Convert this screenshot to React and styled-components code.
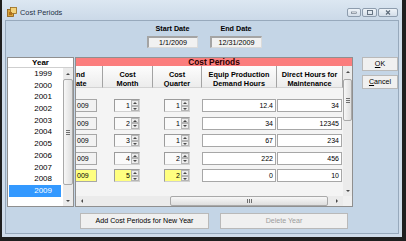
import React from 'react';
import styled, { createGlobalStyle } from 'styled-components';

const GlobalStyle = createGlobalStyle`
  html, body {
    margin: 0;
    padding: 0;
    background: #1f1f1f;
  }
  body {
    font-family: 'Liberation Sans', Arial, sans-serif;
    color: #000;
  }
  #root {
    width: 406px;
    height: 241px;
    overflow: hidden;
  }
`;

const Window = styled.div`
  width: 400px;
  height: 237px;
  margin-left: 2px;
  background: #cfdcea;
  display: flex;
  flex-direction: column;
  box-sizing: border-box;
`;

const TitleBar = styled.div`
  height: 20px;
  box-sizing: border-box;
  padding: 4px 4px 0 5px;
  display: flex;
  align-items: center;
  background: linear-gradient(#dce7f2, #cbd9e8);
`;

const Title = styled.span`
  margin-left: 3px;
  font-size: 7.4px;
  color: #1e2f45;
`;

const Controls = styled.div`
  margin-left: auto;
  display: flex;
  gap: 1px;
`;

const WinButton = styled.div`
  width: ${p => p.$w}px;
  height: 9px;
  box-sizing: border-box;
  border: 1px solid #8d9cad;
  border-radius: 2px;
  background: linear-gradient(#eef3f8, #d4dee9);
  display: flex;
  align-items: center;
  justify-content: center;
`;

const Client = styled.div`
  flex: 1;
  margin: 0 3px 3px;
  border: 1px solid #97a9bc;
  background: #c4d5e6;
  display: flex;
  flex-direction: column;
`;

const DatesRow = styled.div`
  display: flex;
  gap: 12px;
  margin-left: 141px;
  padding-top: 3px;
`;

const DateGroup = styled.div`
  width: ${p => p.$w}px;
  display: flex;
  flex-direction: column;
  align-items: center;
`;

const DateLabel = styled.div`
  font-size: 7.2px;
  font-weight: 700;
  line-height: 9px;
  margin-bottom: 3px;
`;

const DateBox = styled.div`
  width: 100%;
  height: 12px;
  box-sizing: border-box;
  border-style: solid;
  border-width: 2px 1px 1px 2px;
  border-color: #a4a4a4 #dadada #dadada #a4a4a4;
  background: #f1f1f1;
  font-size: 7.2px;
  line-height: 9px;
  text-align: center;
`;

const MainRow = styled.div`
  display: flex;
  align-items: flex-start;
  margin-top: 9px;
  padding-left: 1px;
`;

const YearPanel = styled.div`
  width: 67px;
  height: 150px;
  box-sizing: border-box;
  border: 1px solid #8f8f8f;
  background: #fff;
  display: flex;
  flex-direction: column;
`;

const YearHeader = styled.div`
  height: 10px;
  box-sizing: border-box;
  border-bottom: 1px solid #cfcfcf;
  font-size: 8px;
  font-weight: 700;
  line-height: 9px;
  text-align: center;
`;

const YearBody = styled.div`
  flex: 1;
  display: flex;
`;

const YearList = styled.div`
  flex: 1;
`;

const YearItem = styled.div`
  height: 11.7px;
  line-height: 11.7px;
  margin: 0 2px 0 1px;
  padding-right: 9px;
  font-size: 8px;
  text-align: right;
  background: ${p => (p.$selected ? '#3399ff' : 'transparent')};
  color: ${p => (p.$selected ? '#fff' : '#000')};
`;

const ScrollBar = styled.div`
  display: flex;
  flex-direction: ${p => (p.$horizontal ? 'row' : 'column')};
  width: ${p => (p.$horizontal ? `${p.$size}px` : `${p.$thick}px`)};
  height: ${p => (p.$horizontal ? `${p.$thick}px` : `${p.$size}px`)};
  background: #ebebeb;
  box-sizing: border-box;
  flex-shrink: 0;
`;

const ScrollArrow = styled.div`
  flex: 0 0 ${p => p.$len}px;
  display: flex;
  align-items: center;
  justify-content: center;
`;

const Triangle = styled.div`
  width: 0;
  height: 0;
  border-style: solid;
  ${p =>
    p.$dir === 'up'
      ? 'border-width: 0 2px 2px 2px; border-color: transparent transparent #4a4a4a transparent;'
      : p.$dir === 'down'
      ? 'border-width: 2px 2px 0 2px; border-color: #4a4a4a transparent transparent transparent;'
      : p.$dir === 'left'
      ? 'border-width: 2px 2px 2px 0; border-color: transparent #4a4a4a transparent transparent;'
      : 'border-width: 2px 0 2px 2px; border-color: transparent transparent transparent #4a4a4a;'}
`;

const ScrollSpace = styled.div`
  flex: 0 0 ${p => p.$len}px;
`;

const Thumb = styled.div`
  flex: 0 0 ${p => p.$len}px;
  box-sizing: border-box;
  border: 1px solid #a9a9a9;
  border-radius: 2px;
  background: ${p =>
    p.$horizontal
      ? 'linear-gradient(#f7f7f7, #dedede)'
      : 'linear-gradient(to right, #f7f7f7, #dedede)'};
  display: flex;
  align-items: center;
  justify-content: center;
`;

const Grip = styled.div`
  width: ${p => (p.$horizontal ? 5 : 4)}px;
  height: ${p => (p.$horizontal ? 4 : 5)}px;
  background: ${p =>
    p.$horizontal
      ? 'repeating-linear-gradient(to right, #6f6f6f 0 1px, transparent 1px 2px)'
      : 'repeating-linear-gradient(#6f6f6f 0 1px, transparent 1px 2px)'};
`;

const GridPanel = styled.div`
  width: 278px;
  height: 150px;
  margin-left: 1px;
  box-sizing: border-box;
  border: 1px solid #8f8f8f;
  background: #f4f4f4;
  display: flex;
  flex-direction: column;
`;

const PinkBar = styled.div`
  height: 8px;
  background: #fb7d7d;
  font-size: 8.4px;
  font-weight: 700;
  line-height: 8px;
  text-align: center;
  color: #2a0000;
`;

const GridMiddle = styled.div`
  display: flex;
  height: 130px;
`;

const Table = styled.div`
  width: 267px;
  display: flex;
  flex-direction: column;
`;

const HeaderRow = styled.div`
  display: flex;
  height: 22px;
`;

const HeaderCell = styled.div`
  width: ${p => p.$w}px;
  box-sizing: border-box;
  padding-top: 4px;
  padding-left: ${p => (p.$left ? 0 : 0)}px;
  border-right: 1px solid #a3a3a3;
  border-bottom: 1px solid #d3d3d3;
  background: linear-gradient(#fdfdfd, #ececec);
  font-size: 7.3px;
  font-weight: 700;
  line-height: 9px;
  text-align: ${p => (p.$left ? 'left' : 'center')};
  white-space: nowrap;
  overflow: hidden;
`;

const Rows = styled.div`
  padding-top: 9px;
`;

const Row = styled.div`
  display: flex;
  height: 17.5px;
  align-items: center;
`;

const Cell = styled.div`
  width: ${p => p.$w}px;
  padding-left: ${p => p.$pad || 0}px;
  box-sizing: border-box;
  display: flex;
`;

const TextBox = styled.div`
  width: ${p => p.$w}px;
  height: 13px;
  box-sizing: border-box;
  border: 1px solid #a7a7a7;
  border-left-width: ${p => (p.$cut ? 0 : 1)}px;
  background: ${p => (p.$hl ? '#ffff80' : p.$grey ? '#f2f2f2' : '#fff')};
  font-size: 7px;
  line-height: 11px;
  text-align: ${p => (p.$cut ? 'left' : 'right')};
  padding: 0 2px 0 ${p => (p.$cut ? 1 : 0)}px;
  overflow: hidden;
`;

const SpinBox = styled.div`
  width: 26px;
  height: 13px;
  box-sizing: border-box;
  border-style: solid;
  border-width: 1px;
  border-color: #9b9b9b #d0d0d0 #d0d0d0 #9b9b9b;
  display: flex;
  background: #fafafa;
`;

const SpinValue = styled.div`
  flex: 1;
  background: ${p => (p.$hl ? '#ffff80' : 'transparent')};
  font-size: 7px;
  line-height: 11px;
  text-align: right;
  padding-right: 1px;
`;

const SpinButtons = styled.div`
  width: 8px;
  display: flex;
  flex-direction: column;
`;

const SpinHalf = styled.div`
  flex: 1;
  box-sizing: border-box;
  border: 1px solid #b5b5b5;
  background: #ececec;
  display: flex;
  align-items: center;
  justify-content: center;
`;

const Corner = styled.div`
  flex: 1;
  background: #f0f0f0;
`;

const HRow = styled.div`
  display: flex;
  height: 10px;
`;

const SideButtons = styled.div`
  margin-left: 9px;
  width: 36px;
  display: flex;
  flex-direction: column;
  gap: 4px;
`;

const Button = styled.div`
  width: ${p => p.$w || 36}px;
  height: ${p => p.$h || 14}px;
  box-sizing: border-box;
  border-style: solid;
  border-width: 1px;
  border-color: #ffffff #7c7c7c #7c7c7c #ffffff;
  outline: 1px solid #b9b9b9;
  outline-offset: -1px;
  background: #f0f0f0;
  font-size: 7.1px;
  line-height: ${p => (p.$h || 14) - 2}px;
  text-align: center;
  color: ${p => (p.$disabled ? '#9d9d9d' : '#000')};
  u {
    text-decoration: underline;
  }
`;

const BottomRow = styled.div`
  display: flex;
  gap: 11px;
  margin: 6px 0 0 74px;
`;

function AppIcon() {
  return (
    <svg width="10" height="10" viewBox="0 0 10 10">
      <rect x="0.5" y="2.5" width="6" height="7" fill="#d9a43a" stroke="#8a5a12" strokeWidth="0.8" />
      <rect x="3.5" y="0.5" width="6" height="6" fill="#f3d27a" stroke="#9a6a1a" strokeWidth="0.8" />
      <rect x="2" y="5" width="3" height="3" fill="#b0701a" />
    </svg>
  );
}

function VScroll({ size, thick, thumbStart, thumbLen, endArrow = 11 }) {
  const rest = size - 11 - endArrow - thumbStart - thumbLen;
  return (
    <ScrollBar $size={size} $thick={thick}>
      <ScrollArrow $len={11}>
        <Triangle $dir="up" />
      </ScrollArrow>
      <ScrollSpace $len={thumbStart} />
      <Thumb $len={thumbLen}>
        <Grip />
      </Thumb>
      <ScrollSpace $len={rest} />
      <ScrollArrow $len={endArrow}>
        <Triangle $dir="down" />
      </ScrollArrow>
    </ScrollBar>
  );
}

function HScroll({ size, thick, thumbStart, thumbLen }) {
  const rest = size - 24 - thumbStart - thumbLen;
  return (
    <ScrollBar $horizontal $size={size} $thick={thick}>
      <ScrollArrow $len={12}>
        <Triangle $dir="left" />
      </ScrollArrow>
      <ScrollSpace $len={thumbStart} />
      <Thumb $horizontal $len={thumbLen}>
        <Grip $horizontal />
      </Thumb>
      <ScrollSpace $len={rest} />
      <ScrollArrow $len={12}>
        <Triangle $dir="right" />
      </ScrollArrow>
    </ScrollBar>
  );
}

function Spinner({ value, hl }) {
  return (
    <SpinBox>
      <SpinValue $hl={hl}>{value}</SpinValue>
      <SpinButtons>
        <SpinHalf>
          <Triangle $dir="up" />
        </SpinHalf>
        <SpinHalf>
          <Triangle $dir="down" />
        </SpinHalf>
      </SpinButtons>
    </SpinBox>
  );
}

const years = [1999, 2000, 2001, 2002, 2003, 2004, 2005, 2006, 2007, 2008, 2009];

const rows = [
  { month: 1, quarter: 1, equip: '12.4', direct: '34' },
  { month: 2, quarter: 1, equip: '34', direct: '12345' },
  { month: 3, quarter: 1, equip: '67', direct: '234' },
  { month: 4, quarter: 2, equip: '222', direct: '456' },
  { month: 5, quarter: 2, equip: '0', direct: '10', hl: true },
];

const cols = [27, 50, 49, 75, 66];

export default function App() {
  return (
    <>
      <GlobalStyle />
      <Window>
        <TitleBar>
          <AppIcon />
          <Title>Cost Periods</Title>
          <Controls>
            <WinButton $w={14}>
              <svg width="6" height="4" viewBox="0 0 6 4">
                <rect x="0.5" y="2" width="5" height="1.5" fill="#fff" stroke="#5a6878" strokeWidth="0.6" />
              </svg>
            </WinButton>
            <WinButton $w={15}>
              <svg width="6" height="5" viewBox="0 0 6 5">
                <rect x="0.5" y="0.5" width="5" height="4" fill="none" stroke="#5a6878" strokeWidth="0.9" />
              </svg>
            </WinButton>
            <WinButton $w={20}>
              <svg width="6" height="5" viewBox="0 0 6 5">
                <path d="M1 0.5 L5 4.5 M5 0.5 L1 4.5" stroke="#5a6878" strokeWidth="1.1" />
              </svg>
            </WinButton>
          </Controls>
        </TitleBar>
        <Client>
          <DatesRow>
            <DateGroup $w={51}>
              <DateLabel>Start Date</DateLabel>
              <DateBox>1/1/2009</DateBox>
            </DateGroup>
            <DateGroup $w={52}>
              <DateLabel>End Date</DateLabel>
              <DateBox>12/31/2009</DateBox>
            </DateGroup>
          </DatesRow>

          <MainRow>
            <YearPanel>
              <YearHeader>Year</YearHeader>
              <YearBody>
                <YearList>
                  {years.map(y => (
                    <YearItem key={y} $selected={y === 2009}>
                      {y}
                    </YearItem>
                  ))}
                </YearList>
                <VScroll size={138} thick={10} thumbStart={0} thumbLen={106} />
              </YearBody>
            </YearPanel>

            <GridPanel>
              <PinkBar>Cost Periods</PinkBar>
              <GridMiddle>
                <Table>
                  <HeaderRow>
                    <HeaderCell $w={cols[0]} $left>
                      nd
                      <br />
                      ate
                    </HeaderCell>
                    <HeaderCell $w={cols[1]}>
                      Cost
                      <br />
                      Month
                    </HeaderCell>
                    <HeaderCell $w={cols[2]}>
                      Cost
                      <br />
                      Quarter
                    </HeaderCell>
                    <HeaderCell $w={cols[3]}>
                      Equip Production
                      <br />
                      Demand Hours
                    </HeaderCell>
                    <HeaderCell $w={cols[4]}>
                      Direct Hours for
                      <br />
                      Maintenance
                    </HeaderCell>
                  </HeaderRow>
                  <Rows>
                    {rows.map(r => (
                      <Row key={r.month}>
                        <Cell $w={cols[0]}>
                          <TextBox $w={21} $cut $grey $hl={r.hl}>
                            009
                          </TextBox>
                        </Cell>
                        <Cell $w={cols[1]} $pad={11}>
                          <Spinner value={r.month} hl={r.hl} />
                        </Cell>
                        <Cell $w={cols[2]} $pad={11}>
                          <Spinner value={r.quarter} hl={r.hl} />
                        </Cell>
                        <Cell $w={cols[3]}>
                          <TextBox $w={74}>{r.equip}</TextBox>
                        </Cell>
                        <Cell $w={cols[4]}>
                          <TextBox $w={65}>{r.direct}</TextBox>
                        </Cell>
                      </Row>
                    ))}
                  </Rows>
                </Table>
                <VScroll size={130} thick={9} thumbStart={2} thumbLen={42} />
              </GridMiddle>
              <HRow>
                <HScroll size={267} thick={10} thumbStart={82} thumbLen={158} />
                <Corner />
              </HRow>
            </GridPanel>

            <SideButtons>
              <Button>
                <u>O</u>K
              </Button>
              <Button>
                <u>C</u>ancel
              </Button>
            </SideButtons>
          </MainRow>

          <BottomRow>
            <Button $w={129} $h={16}>
              Add Cost Periods for New Year
            </Button>
            <Button $w={128} $h={16} $disabled>
              Delete Year
            </Button>
          </BottomRow>
        </Client>
      </Window>
    </>
  );
}
